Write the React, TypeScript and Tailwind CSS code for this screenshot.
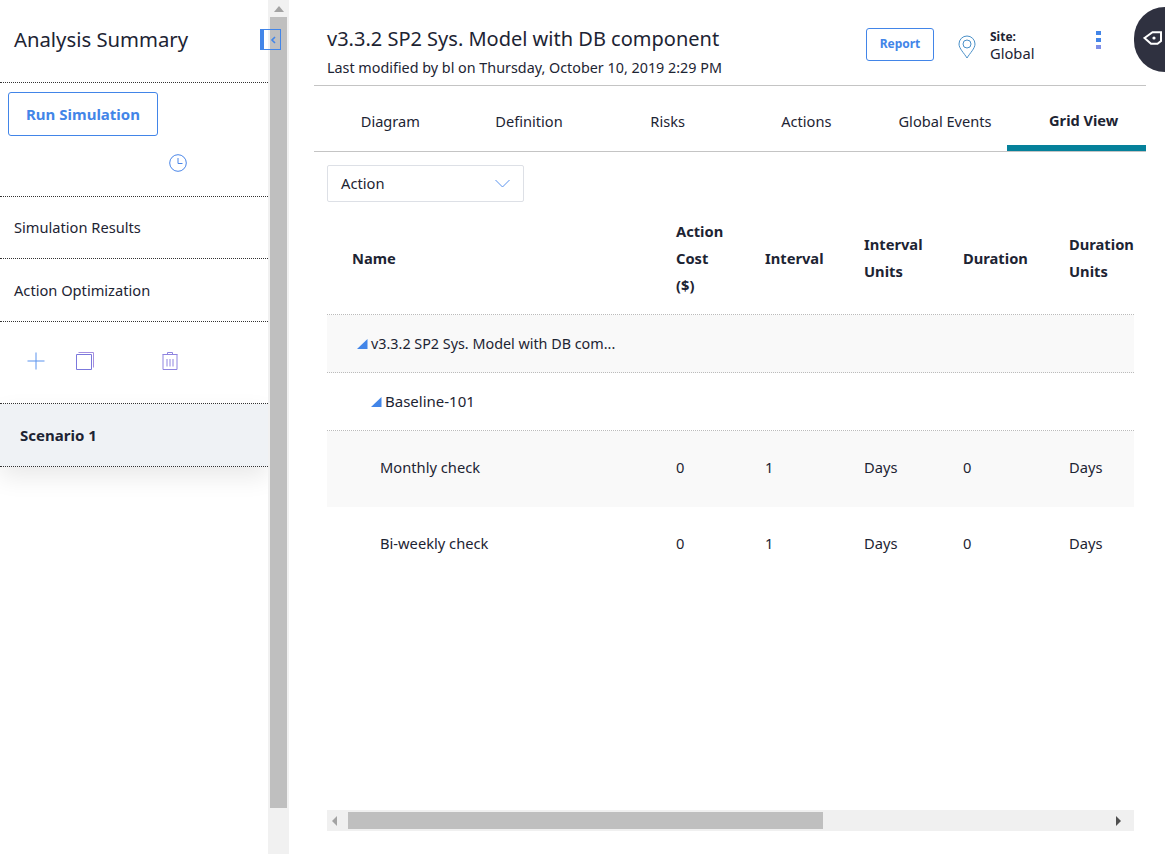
import React, { type FC } from 'react'

const font = "font-['Noto_Sans','Open_Sans',sans-serif]"
const dotted = 'border-b border-dotted border-[#333]'

const tabs = ['Diagram', 'Definition', 'Risks', 'Actions', 'Global Events', 'Grid View']

const Caret: FC = () => (
  <svg width="11" height="10" viewBox="0 0 11 10" className="shrink-0">
    <path d="M10.500 0v10H0z" fill="#4285e8" />
  </svg>
)

const Sidebar: FC = () => (
  <aside className="flex w-[268px] shrink-0 flex-col text-[#1d2433]">
    <div className={`h-[83px] pt-[24px] pl-[14px] ${dotted}`}>
      <span className="text-[20.3px] leading-[30px]">Analysis Summary</span>
    </div>
    <div className={`h-[114px] pl-[8px] pt-[9px] ${dotted}`}>
      <button className="h-[44px] w-[150px] rounded-[3px] border border-[#4285e8] text-[15px] font-bold text-[#4285e8]">
        Run Simulation
      </button>
      <div className="mt-[18px] pl-[161px]">
        <svg width="18" height="18" viewBox="0 0 18 18" fill="none" stroke="#4a86e8">
          <circle cx="9" cy="9" r="8.300" />
          <path d="M9 4v5.500h4.500" />
        </svg>
      </div>
    </div>
    <div className={`flex h-[62px] items-center pl-[14px] text-[14.65px] ${dotted}`}>Simulation Results</div>
    <div className={`flex h-[63px] items-center pl-[14px] pt-[1px] text-[14.65px] ${dotted}`}>Action Optimization</div>
    <div className={`flex h-[82px] items-center pb-[4px] pl-[27px] ${dotted}`}>
      <svg width="18" height="18" viewBox="0 0 18 18" stroke="#5b93ee" fill="none">
        <path d="M9 .5v17M.5 9h17" />
      </svg>
      <svg width="18" height="18" viewBox="0 0 18 18" fill="none" className="ml-[31px]">
        <path d="M2.500.5h15v15" stroke="#a58fe0" />
        <path d="M.5 2.500h15v15H.5z" stroke="#7b78dc" />
      </svg>
      <svg width="16" height="18" viewBox="0 0 16 18" fill="none" className="ml-[68px]">
        <path d="M5.500 2.500V.5h5v2M.5 2.500h15M1 2.500v15h14v-15" stroke="#8f84e0" />
        <path d="M5 7v7.500M8 7v7.500M11 7v7.500" stroke="#8f84e0" />
      </svg>
    </div>
    <div className={`flex h-[63px] items-center bg-[#eff2f5] pl-[20px] text-[15px] font-bold shadow-[0_10px_24px_rgba(0,0,0,0.09)] ${dotted} border-dashed border-[#222]`}>
      Scenario 1
    </div>
  </aside>
)

const VScroll: FC = () => (
  <div className="flex w-[21px] shrink-0 flex-col items-center bg-[#f1f1f1] pl-[1px]">
    <div className="flex h-[17px] items-center">
      <div className="h-0 w-0 border-x-[5px] border-b-[6px] border-x-transparent border-b-[#a3a3a3]" />
    </div>
    <div className="ml-[-1px] h-[791px] w-[17px] bg-[#bfbfbf]" />
  </div>
)

const Header: FC = () => (
  <header className="flex h-[86px] items-start border-b border-[#c4c4c4] pl-[13px]">
    <div className="w-[539px] pt-[24px] text-[#1d2433]">
      <div className="text-[20px] leading-[29px]">v3.3.2 SP2 Sys. Model with DB component</div>
      <div className="mt-[5px] text-[14.35px] leading-[20px]">Last modified by bl on Thursday, October 10, 2019 2:29 PM</div>
    </div>
    <button className="mt-[28px] h-[33px] w-[68px] rounded-[3px] border border-[#4285e8] pb-[2px] text-[12px] font-bold text-[#4285e8]">
      Report
    </button>
    <svg width="18" height="24" viewBox="0 0 18 24" fill="none" stroke="#4a90c8" className="mt-[35px] ml-[24px]">
      <path d="M9 23C6 18 1 13.500 1 9a8 8 0 0 1 16 0c0 4.500-5 9-8 14z" />
      <circle cx="9" cy="9" r="4" />
    </svg>
    <div className="mt-[29px] ml-[14px] w-[101px] text-[#1d2433]">
      <div className="text-[12px] font-bold leading-[15px]">Site:</div>
      <div className="text-[14.700px] leading-[19px]">Global</div>
    </div>
    <div className="mt-[31px] flex flex-col gap-[3px] pl-[5px]">
      <span className="h-[4px] w-[5px] bg-[#4285e8]" />
      <span className="h-[4px] w-[5px] bg-[#4285e8]" />
      <span className="h-[4px] w-[5px] bg-[#7d8ee8]" />
    </div>
  </header>
)

const Tabs: FC = () => (
  <nav className="grid h-[66px] grid-cols-6 border-b border-[#c4c4c4] text-[14.6px] text-[#1d2433]">
    {tabs.map((tab) => (
      <div
        key={tab}
        className={
          tab === 'Grid View'
            ? 'flex items-center justify-center border-b-[6px] border-[#05819b] pl-[14px] pt-[10px] font-bold'
            : 'flex items-center justify-center pl-[14px] pt-[6px]'
        }
      >
        {tab}
      </div>
    ))}
  </nav>
)

const cols = 'grid grid-cols-[349px_89px_99px_99px_106px_65px]'

const GridTable: FC = () => (
  <div className="w-[807px] text-[14.7px] text-[#1d2433]">
    <div className={`${cols} h-[113px] items-center border-b border-dotted border-[#bbb] font-bold leading-[27px]`}>
      <div className="pl-[25px]">Name</div>
      <div>Action<br />Cost<br />($)</div>
      <div>Interval</div>
      <div>Interval<br />Units</div>
      <div>Duration</div>
      <div className="whitespace-nowrap">Duration<br />Units</div>
    </div>
    <div className="flex h-[58px] items-center gap-[3px] border-b border-dotted border-[#bbb] bg-[#f9f9f9] pl-[30px]">
      <Caret />
      <span className="text-[14.35px]">v3.3.2 SP2 Sys. Model with DB com...</span>
    </div>
    <div className="flex h-[58px] items-center gap-[3px] border-b border-dotted border-[#bbb] pl-[44px]">
      <Caret />
      <span className="text-[15px]">Baseline-101</span>
    </div>
    <div className={`${cols} h-[76px] items-center bg-[#f9f9f9] pb-[4px]`}>
      <div className="pl-[53px]">Monthly check</div>
      <div>0</div>
      <div>1</div>
      <div>Days</div>
      <div>0</div>
      <div>Days</div>
    </div>
    <div className={`${cols} h-[76px] items-center pb-[4px]`}>
      <div className="pl-[53px]">Bi-weekly check</div>
      <div>0</div>
      <div>1</div>
      <div>Days</div>
      <div>0</div>
      <div>Days</div>
    </div>
  </div>
)

const HScroll: FC = () => (
  <div className="mt-[227px] flex h-[21px] w-[807px] items-center bg-[#f0f0f0]">
    <div className="ml-[5px] h-0 w-0 border-y-[5px] border-r-[5px] border-y-transparent border-r-[#a3a3a3]" />
    <div className="ml-[11px] h-[17px] w-[475px] bg-[#bfbfbf]" />
    <div className="ml-[293px] h-0 w-0 border-y-[5px] border-l-[5px] border-y-transparent border-l-[#505050]" />
  </div>
)

const App: FC = () => (
  <div className={`${font} relative flex h-[854px] w-[1165px] overflow-hidden bg-white`}>
    <Sidebar />
    <VScroll />
    <main className="ml-[25px] w-[832px]">
      <Header />
      <Tabs />
      <div className="pl-[13px]">
        <div className="mt-[13px] flex h-[37px] w-[197px] items-center justify-between rounded-[2px] border border-[#dde0e6] pl-[13px] pr-[13px] text-[14.7px] text-[#1d2433]">
          <span>Action</span>
          <svg width="15" height="9" viewBox="0 0 15 9" fill="none" stroke="#5b93ee">
            <path d="M.5 1 7.500 8 14.500 1" />
          </svg>
        </div>
        <GridTable />
        <HScroll />
      </div>
    </main>
    <button className="absolute left-[260px] top-[29px] flex h-[21px] w-[21px] items-center justify-center border border-l-[4px] border-[#4285e8] pl-[2px]">
      <svg width="6" height="8" viewBox="0 0 6 8">
        <path d="M5 1 2 4l3 3" fill="none" stroke="#4285e8" strokeWidth="1.600" />
      </svg>
    </button>
    <div className="absolute right-0 top-[7px] flex h-[65px] w-[31px] items-center rounded-l-full bg-[#2f3140] pl-[9px]">
      <svg width="20" height="14" viewBox="0 0 20 14" fill="none" className="mb-[3px]">
        <path d="M1.500 7 9.500 1.200H18V10L14.500 12.800H8z" stroke="#fff" strokeWidth="2" />
        <circle cx="11" cy="7" r="1.600" fill="#fff" />
      </svg>
    </div>
  </div>
)

export default App
